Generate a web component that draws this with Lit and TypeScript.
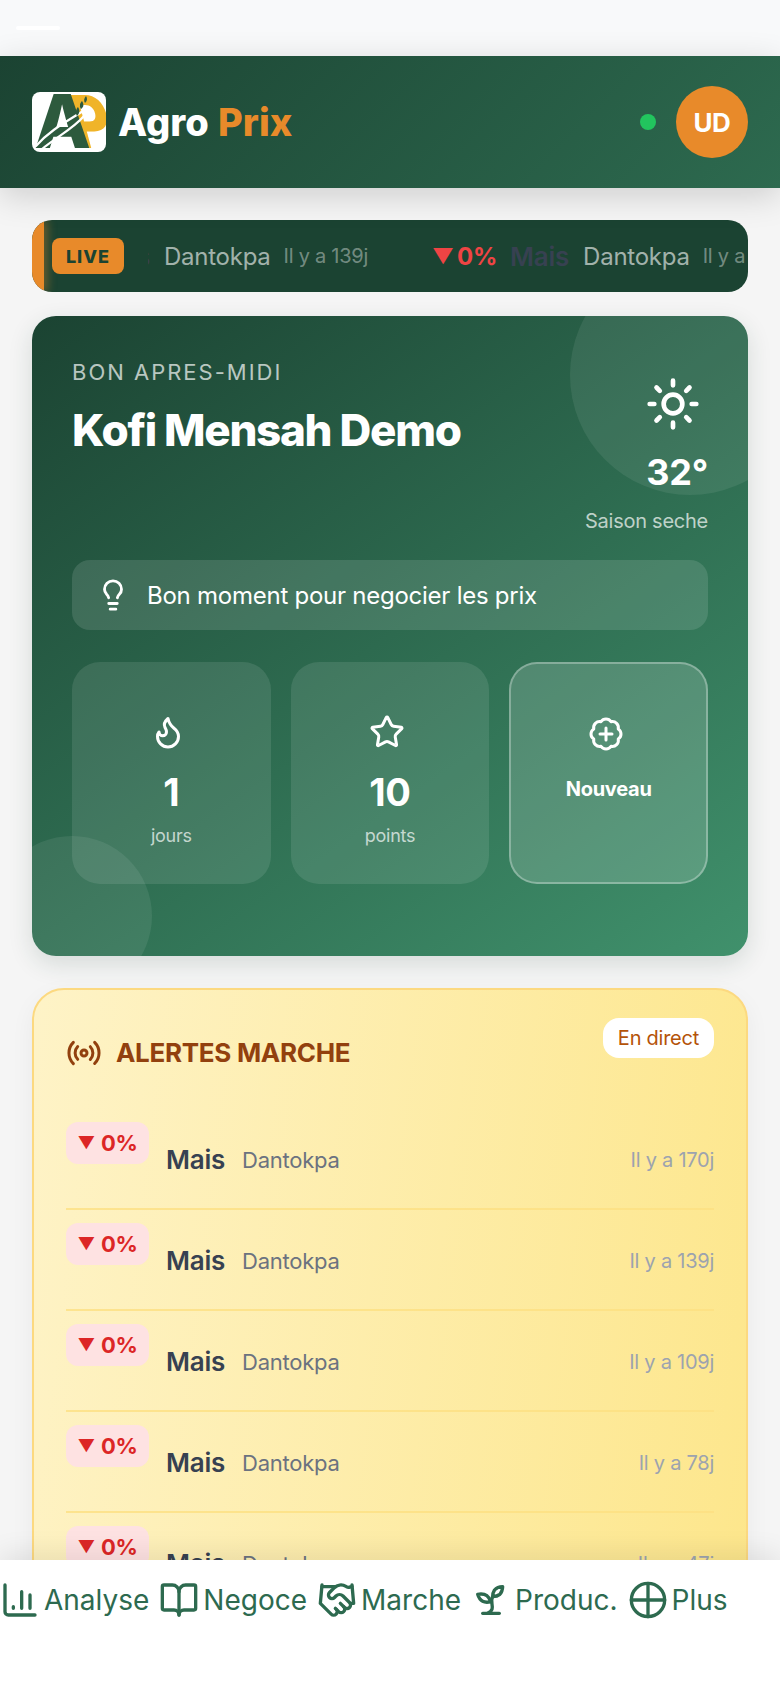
import { LitElement, html, css, svg } from "lit";
import { customElement } from "lit/decorators.js";

const alerts = [
  { time: "Il y a 170j" },
  { time: "Il y a 139j" },
  { time: "Il y a 109j" },
  { time: "Il y a 78j" },
  { time: "Il y a 47j" },
];

const icon = (body: unknown, cls: string) => html`<svg class=${cls} viewBox="0 0 24 24" fill="none" stroke="currentColor" stroke-width="2" stroke-linecap="round" stroke-linejoin="round">${body}</svg>`;

const sun = svg`<circle cx="12" cy="12" r="4"/><path d="M12 2v2M12 20v2M4.93 4.93l1.41 1.41M17.66 17.66l1.41 1.41M2 12h2M20 12h2M6.34 17.66l-1.41 1.41M19.07 4.93l-1.41 1.41"/>`;
const bulb = svg`<path d="M15.09 14c.18-.98.65-1.74 1.41-2.5A4.65 4.65 0 0 0 18 8 6 6 0 0 0 6 8c0 1 .23 2.23 1.5 3.5A4.65 4.65 0 0 1 8.91 14"/><path d="M9 18h6M10 22h4"/>`;
const flame = svg`<path d="M8.5 14.5A2.5 2.5 0 0 0 11 12c0-1.38-.5-2-1-3-1.072-2.143-.224-4.054 2-6 .5 2.5 2 4.9 4 6.5 2 1.6 3 3.5 3 5.5a7 7 0 1 1-14 0c0-1.153.433-2.294 1-3a2.5 2.5 0 0 0 2.5 2.5z"/>`;
const star = svg`<path d="M11.525 2.295a.53.53 0 0 1 .95 0l2.31 4.679a2.123 2.123 0 0 0 1.595 1.16l5.166.756a.53.53 0 0 1 .294.904l-3.736 3.638a2.123 2.123 0 0 0-.611 1.878l.882 5.14a.53.53 0 0 1-.771.56l-4.618-2.428a2.122 2.122 0 0 0-1.973 0L6.396 21.01a.53.53 0 0 1-.77-.56l.881-5.139a2.122 2.122 0 0 0-.611-1.879L2.16 9.795a.53.53 0 0 1 .294-.906l5.165-.755a2.122 2.122 0 0 0 1.597-1.16z"/>`;
const badgePlus = svg`<path d="M3.85 8.62a4 4 0 0 1 4.78-4.77 4 4 0 0 1 6.74 0 4 4 0 0 1 4.78 4.78 4 4 0 0 1 0 6.74 4 4 0 0 1-4.77 4.78 4 4 0 0 1-6.75 0 4 4 0 0 1-4.78-4.77 4 4 0 0 1 0-6.76Z"/><path d="M12 8v8M8 12h8"/>`;
const radio = svg`<path d="M4.9 19.1C1 15.2 1 8.8 4.9 4.9M7.8 16.2c-2.3-2.3-2.3-6.1 0-8.5"/><circle cx="12" cy="12" r="2"/><path d="M16.2 7.8c2.3 2.3 2.3 6.1 0 8.5M19.1 4.9C23 8.8 23 15.1 19.1 19"/>`;
const chart = svg`<path d="M3 3v16a2 2 0 0 0 2 2h16"/><path d="M8 17v-1M13 17V7M18 17V9"/>`;
const book = svg`<path d="M12 7v14"/><path d="M3 18a1 1 0 0 1-1-1V4a1 1 0 0 1 1-1h5a4 4 0 0 1 4 4 4 4 0 0 1 4-4h5a1 1 0 0 1 1 1v13a1 1 0 0 1-1 1h-6a3 3 0 0 0-3 3 3 3 0 0 0-3-3z"/>`;
const shake = svg`<path d="M11 17l2 2a1 1 0 1 0 3-3"/><path d="M14 14l2.5 2.5a1 1 0 1 0 3-3l-3.88-3.88a3 3 0 0 0-4.24 0l-.88.88a1 1 0 1 1-3-3l2.81-2.81a5.79 5.79 0 0 1 7.06-.87l.47.28a2 2 0 0 0 1.42.25L21 4"/><path d="M21 3l1 11h-2"/><path d="M3 3L2 14l6.5 6.5a1 1 0 1 0 3-3"/><path d="M3 4h8"/>`;
const sprout = svg`<path d="M7 20h10"/><path d="M10 20c5.5-2.5.8-6.4 3-10"/><path d="M9.5 9.4c1.1.8 1.8 2.2 2.3 3.7-2 .4-3.5.4-4.8-.3-1.2-.6-2.3-1.9-3-4.2 2.8-.5 4.4 0 5.5.8z"/><path d="M14.1 6a7 7 0 0 0-1.1 4c1.9-.1 3.3-.6 4.3-1.4 1-1 1.6-2.3 1.7-4.6-2.7.1-4 1-4.9 2z"/>`;
const globe = svg`<circle cx="12" cy="12" r="10"/><path d="M12 2v20M2 12h20"/>`;

@customElement("app-root")
export class AppRoot extends LitElement {
  static styles = css`
    :host {
      display: block;
      position: relative;
      height: 1688px;
      overflow: hidden;
      background: #f5f5f5;
      font-family: Inter, "Liberation Sans", sans-serif;
      letter-spacing: -0.25px;
      color: #fff;
    }

    svg { display: block; flex: none; }

    .status {
      height: 56px;
      box-sizing: border-box;
      padding: 26px 0 0 16px;
      background: #f8f9fa;
    }
    .status i { display: block; width: 44px; height: 4px; border-radius: 2px; background: #fff; }

    .header {
      position: relative;
      height: 132px;
      box-sizing: border-box;
      padding: 0 32px;
      display: flex;
      align-items: center;
      justify-content: space-between;
      background: linear-gradient(135deg, #1b4332, #2d6a4f);
      box-shadow: 0 8px 32px rgba(0, 0, 0, 0.16);
    }
    .brand { display: flex; align-items: center; gap: 12px; }
    .logo { width: 74px; height: 60px; }
    .brand-name { font-size: 38px; font-weight: 800; letter-spacing: 0; line-height: 46px; }
    .brand-name span { color: #e88a2a; margin-left: 1px; }
    .user { display: flex; align-items: center; gap: 20px; }
    .dot { width: 16px; height: 16px; border-radius: 50%; background: #22c55e; }
    .avatar {
      width: 72px; height: 72px; border-radius: 50%;
      background: #e88a2a;
      display: flex; align-items: center; justify-content: center;
      font-size: 26px; font-weight: 700; letter-spacing: -0.5px;
    }

    main { padding: 32px 32px 0; }

    .ticker {
      height: 72px;
      display: flex;
      align-items: center;
      border-radius: 20px;
      overflow: hidden;
      background: #1b4332;
    }
    .ticker-bar { width: 12px; height: 100%; background: #e88a2a; box-shadow: 4px 0 8px rgba(232, 138, 42, 0.35); }
    .live {
      margin-left: 8px;
      width: 72px; height: 36px;
      border-radius: 8px;
      background: #e88a2a;
      color: #1b4332;
      display: flex; align-items: center; justify-content: center;
      font-size: 18px; font-weight: 800; letter-spacing: 1px;
    }
    .ticker-view { flex: 1; margin: 0 3px 0 24px; overflow: hidden; }
    .track { display: flex; align-items: center; gap: 64px; margin-left: -135px; white-space: nowrap; }
    .tick { display: flex; align-items: center; }
    .tick .tri { font-size: 21px; font-weight: 700; color: #ef4444; width: 25px; }
    .tick .change { font-size: 24px; font-weight: 700; color: #ef4444; margin-right: 13px; width: 40px; }
    .tick .crop { color: #374151; font-size: 26px; font-weight: 600; margin-right: 13px; width: 60px; }
    .tick .place { color: rgba(255, 255, 255, 0.6); font-size: 24px; margin-right: 13px; }
    .tick .time { color: rgba(255, 255, 255, 0.4); font-size: 20px; }

    .hero {
      position: relative;
      margin-top: 24px;
      padding: 40px 40px 72px;
      border-radius: 24px;
      overflow: hidden;
      background: linear-gradient(145deg, #1b4332, #2d6a4f 50%, #40916c);
      box-shadow: 0 8px 24px rgba(27, 67, 50, 0.14);
    }
    .blob { position: absolute; border-radius: 50%; background: rgba(255, 255, 255, 0.08); }
    .blob.a { width: 240px; height: 240px; top: -61px; right: -62px; }
    .blob.b { width: 160px; height: 160px; bottom: -40px; left: -40px; }
    .hero-top { position: relative; display: flex; justify-content: space-between; height: 179px; margin-bottom: 25px; }
    .greet { font-size: 22px; line-height: 32px; letter-spacing: 2px; color: rgba(255, 255, 255, 0.7); }
    .name { font-size: 44px; line-height: 53px; font-weight: 800; letter-spacing: -1.3px; margin-top: 16px; }
    .weather { display: flex; flex-direction: column; align-items: flex-end; padding-top: 20px; }
    .sun { width: 56px; height: 56px; margin-right: 7px; }
    .temp { font-size: 36px; line-height: 44px; font-weight: 700; margin-top: 18px; }
    .season { font-size: 20px; line-height: 28px; margin-top: 13px; color: rgba(255, 255, 255, 0.7); }

    .tip {
      position: relative;
      height: 70px;
      box-sizing: border-box;
      padding-left: 24px;
      display: flex; align-items: center; gap: 17px;
      border-radius: 18px;
      background: rgba(255, 255, 255, 0.12);
      font-size: 24px;
    }
    .bulb { width: 34px; height: 34px; }

    .stats { position: relative; margin-top: 32px; display: grid; grid-template-columns: repeat(3, 1fr); gap: 20px; }
    .stat {
      height: 222px;
      box-sizing: border-box;
      padding-top: 52px;
      border-radius: 28px;
      background: rgba(255, 255, 255, 0.1);
      display: flex; flex-direction: column; align-items: center;
    }
    .stat svg { width: 36px; height: 36px; margin-right: 6px; }
    .stat b { font-size: 38px; line-height: 46px; font-weight: 700; margin-top: 19px; }
    .stat small { font-size: 18px; line-height: 24px; margin-top: 9px; color: rgba(255, 255, 255, 0.7); }
    .stat.new { padding-top: 52px; background: rgba(255, 255, 255, 0.16); border: 2px solid rgba(255, 255, 255, 0.3); }
    .stat.new b { font-size: 20px; line-height: 28px; margin-top: 23px; }

    .alerts {
      position: relative;
      margin-top: 32px;
      height: 800px;
      box-sizing: border-box;
      padding: 28px 32px 0;
      border: 2px solid #fcd980;
      border-radius: 32px;
      background: linear-gradient(97deg, #fef3c7, #fde68a);
      box-shadow: 0 8px 24px rgba(0, 0, 0, 0.05);
    }
    .alerts-head { display: flex; justify-content: space-between; align-items: flex-start; height: 91px; }
    .alerts-title { display: flex; align-items: center; gap: 14px; margin-top: 17px; color: #92400e; font-size: 26px; line-height: 36px; font-weight: 700; letter-spacing: -0.3px; }
    .alerts-title svg { width: 36px; height: 36px; }
    .pill {
      height: 40px; padding: 0 15px;
      display: flex; align-items: center;
      border-radius: 16px;
      background: #fff;
      color: #b45309;
      font-size: 20px;
    }
    .row {
      height: 101px;
      box-sizing: border-box;
      padding-top: 13px;
      display: flex;
      align-items: flex-start;
      border-bottom: 2px solid rgba(253, 224, 130, 0.8);
    }
    .change-badge {
      width: 83px; height: 42px;
      display: flex; align-items: center; justify-content: center;
      border-radius: 12px;
      background: #fee2e2;
      color: #dc2626;
      font-size: 22px; font-weight: 700;
    }
    .change-badge i { font-style: normal; font-size: 17px; margin-right: 6px; }
    .crop-name { margin: 17px 0 0 17px; font-size: 26px; line-height: 42px; font-weight: 600; color: #374151; }
    .market { margin: 17px 0 0 17px; font-size: 22px; line-height: 42px; color: #6b7280; }
    .ago { margin: 17px 0 0 auto; font-size: 20px; line-height: 42px; color: #9ca3af; }

    .nav {
      position: absolute;
      left: 0; right: 0; bottom: 0;
      height: 128px;
      box-sizing: border-box;
      padding-top: 18px;
      display: flex;
      align-items: flex-start;
      gap: 10px;
      background: #fff;
      box-shadow: 0 -8px 24px rgba(0, 0, 0, 0.08);
      color: #2d6a4f;
      font-size: 28px;
      line-height: 44px;
      letter-spacing: 0;
    }
    .nav-item { display: flex; align-items: center; gap: 4px; }
    .nav-item svg { width: 40px; height: 40px; }
  `;

  render() {
    const tick = (time: string) => html`<div class="tick">
      <span class="tri">▼</span>
      <span class="change">0%</span>
      <span class="crop">Mais</span>
      <span class="place">Dantokpa</span>
      <span class="time">${time}</span>
    </div>`;
    return html`
      <div class="status"><i></i></div>
      <header class="header">
        <div class="brand">
          <svg class="logo" viewBox="0 0 74 60">
            <rect width="74" height="60" rx="8" fill="#fff"/>
            <text transform="translate(45,56) skewX(15) scale(.85,1)" font-family="Inter, sans-serif" font-size="73" font-weight="800" fill="#f0b429">P</text>
            <text x="2" y="56" font-family="Inter, sans-serif" font-size="74" font-weight="800" fill="#2d5a3d">A</text>
            <path d="M4 54C18 38 34 30 56 16M10 57C26 44 42 36 52 24" fill="none" stroke="#fff" stroke-width="2.2" stroke-linecap="round"/>
            <path d="M45 24c-2-3-1-7 1-9 2 3 2 6-1 9zM49 17c-2-3-1-6 1-8 2 3 2 6-1 8zM53 11c-1.500-2-1-5 1-7 1.500 2 1.500 5-1 7z" fill="#2d5a3d"/>
          </svg>
          <div class="brand-name">Agro <span>Prix</span></div>
        </div>
        <div class="user">
          <div class="dot"></div>
          <div class="avatar">UD</div>
        </div>
      </header>
      <main>
        <div class="ticker">
          <div class="ticker-bar"></div>
          <div class="live">LIVE</div>
          <div class="ticker-view">
            <div class="track">${tick("Il y a 139j")}${tick("Il y a 109j")}</div>
          </div>
        </div>

        <section class="hero">
          <div class="blob a"></div>
          <div class="blob b"></div>
          <div class="hero-top">
            <div>
              <div class="greet">BON APRES-MIDI</div>
              <div class="name">Kofi Mensah Demo</div>
            </div>
            <div class="weather">
              ${icon(sun, "sun")}
              <div class="temp">32°</div>
              <div class="season">Saison seche</div>
            </div>
          </div>
          <div class="tip">${icon(bulb, "bulb")}<span>Bon moment pour negocier les prix</span></div>
          <div class="stats">
            <div class="stat">${icon(flame, "")}<b>1</b><small>jours</small></div>
            <div class="stat">${icon(star, "")}<b>10</b><small>points</small></div>
            <div class="stat new">${icon(badgePlus, "")}<b>Nouveau</b></div>
          </div>
        </section>

        <section class="alerts">
          <div class="alerts-head">
            <div class="alerts-title">${icon(radio, "")}ALERTES MARCHE</div>
            <div class="pill">En direct</div>
          </div>
          ${alerts.map(
            (a) => html`<div class="row">
              <div class="change-badge"><i>▼</i>0%</div>
              <div class="crop-name">Mais</div>
              <div class="market">Dantokpa</div>
              <div class="ago">${a.time}</div>
            </div>`
          )}
        </section>
      </main>
      <nav class="nav">
        <div class="nav-item">${icon(chart, "")}<span>Analyse</span></div>
        <div class="nav-item">${icon(book, "")}<span>Negoce</span></div>
        <div class="nav-item">${icon(shake, "")}<span>Marche</span></div>
        <div class="nav-item">${icon(sprout, "")}<span>Produc.</span></div>
        <div class="nav-item">${icon(globe, "")}<span>Plus</span></div>
      </nav>
    `;
  }
}
